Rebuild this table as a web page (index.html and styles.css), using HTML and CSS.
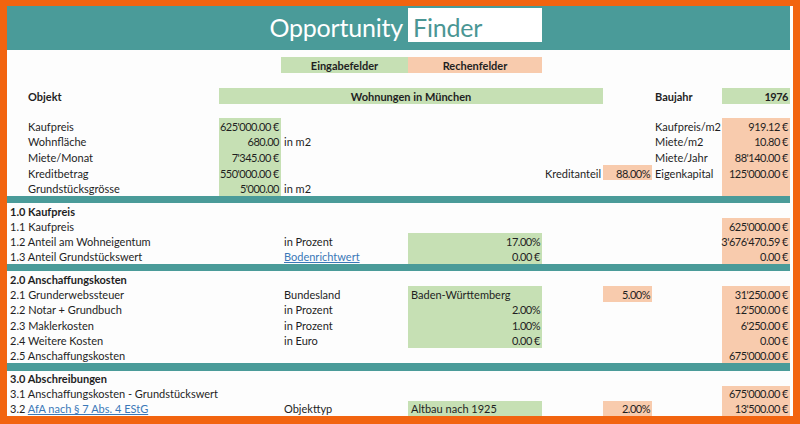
FILE: index.html
```html
<!DOCTYPE html>
<html lang="de">
<head>
<meta charset="utf-8">
<title>Opportunity Finder</title>
<link rel="stylesheet" href="styles.css">
</head>
<body>
<div class="frame">
  <header class="title-bar">
    <div class="title-left">Opportunity</div>
    <div class="title-box">Finder</div>
  </header>

  <div class="row gap7"></div>
  <div class="row h16">
    <div class="c3 green bold center">Eingabefelder</div>
    <div class="c4 orange bold center">Rechenfelder</div>
  </div>
  <div class="row gap15"></div>
  <div class="row h16">
    <div class="c1 bold indent">Objekt</div>
    <div class="c2-5 green bold center">Wohnungen in München</div>
    <div class="c7 bold">Baujahr</div>
    <div class="c8 green bold num">1976</div>
  </div>
  <div class="row gap14"></div>

  <div class="row r0">
    <div class="c1 indent">Kaufpreis</div>
    <div class="c2 green num">625'000.00 €</div>
    <div class="c7">Kaufpreis/m2</div>
    <div class="c8 orange num">919.12 €</div>
  </div>
  <div class="row r0">
    <div class="c1 indent">Wohnfläche</div>
    <div class="c2 green num">680.00</div>
    <div class="c3">in m2</div>
    <div class="c7">Miete/m2</div>
    <div class="c8 orange num">10.80 €</div>
  </div>
  <div class="row r0">
    <div class="c1 indent">Miete/Monat</div>
    <div class="c2 green num">7'345.00 €</div>
    <div class="c7">Miete/Jahr</div>
    <div class="c8 orange num">88'140.00 €</div>
  </div>
  <div class="row r0">
    <div class="c1 indent">Kreditbetrag</div>
    <div class="c2 green num">550'000.00 €</div>
    <div class="c5 right">Kreditanteil</div>
    <div class="c6 orange num">88.00%</div>
    <div class="c7">Eigenkapital</div>
    <div class="c8 orange num">125'000.00 €</div>
  </div>
  <div class="row r0">
    <div class="c1 indent">Grundstücksgrösse</div>
    <div class="c2 green num">5'000.00</div>
    <div class="c3">in m2</div>
    <div class="c8 orange num"></div>
  </div>

  <div class="row bar b7"></div>

  <div class="row r1">
    <div class="c1 bold">1.0 Kaufpreis</div>
  </div>
  <div class="row r1">
    <div class="c1">1.1 Kaufpreis</div>
    <div class="c8 orange num">625'000.00 €</div>
  </div>
  <div class="row r1">
    <div class="c1">1.2 Anteil am Wohneigentum</div>
    <div class="c3">in Prozent</div>
    <div class="c4 green num">17.00%</div>
    <div class="c8 orange num">3'676'470.59 €</div>
  </div>
  <div class="row r1">
    <div class="c1">1.3 Anteil Grundstückswert</div>
    <div class="c3"><span class="link">Bodenrichtwert</span></div>
    <div class="c4 green num">0.00 €</div>
    <div class="c8 orange num">0.00 €</div>
  </div>

  <div class="row bar b7"></div>

  <div class="row r2">
    <div class="c1 bold">2.0 Anschaffungskosten</div>
  </div>
  <div class="row r2">
    <div class="c1">2.1 Grunderwebssteuer</div>
    <div class="c3">Bundesland</div>
    <div class="c4 green">Baden-Württemberg</div>
    <div class="c6 orange num">5.00%</div>
    <div class="c8 orange num">31'250.00 €</div>
  </div>
  <div class="row r2">
    <div class="c1">2.2 Notar + Grundbuch</div>
    <div class="c3">in Prozent</div>
    <div class="c4 green num">2.00%</div>
    <div class="c8 orange num">12'500.00 €</div>
  </div>
  <div class="row r2">
    <div class="c1">2.3 Maklerkosten</div>
    <div class="c3">in Prozent</div>
    <div class="c4 green num">1.00%</div>
    <div class="c8 orange num">6'250.00 €</div>
  </div>
  <div class="row r2">
    <div class="c1">2.4 Weitere Kosten</div>
    <div class="c3">in Euro</div>
    <div class="c4 green num">0.00 €</div>
    <div class="c8 orange num">0.00 €</div>
  </div>
  <div class="row r2">
    <div class="c1">2.5 Anschaffungskosten</div>
    <div class="c8 orange num">675'000.00 €</div>
  </div>

  <div class="row bar b8"></div>

  <div class="row r3">
    <div class="c1 bold">3.0 Abschreibungen</div>
  </div>
  <div class="row r3">
    <div class="c1">3.1 Anschaffungskosten - Grundstückswert</div>
    <div class="c8 orange num">675'000.00 €</div>
  </div>
  <div class="row r3">
    <div class="c1"><span>3.2 <span class="link">AfA nach § 7 Abs. 4 EStG</span></span></div>
    <div class="c3">Objekttyp</div>
    <div class="c4 green">Altbau nach 1925</div>
    <div class="c6 orange num">2.00%</div>
    <div class="c8 orange num">13'500.00 €</div>
  </div>
</div>
</body>
</html>
```

FILE: styles.css
```css
* { box-sizing: border-box; }

html, body {
  margin: 0;
  padding: 0;
  background: #ffffff;
}

body {
  font-family: "Lato", "Open Sans", sans-serif;
  font-size: 11px;
  color: #1f1f1f;
}

.frame {
  width: 800px;
  height: 424px;
  border-style: solid;
  border-color: #f26410;
  border-width: 6px 7px 8px 7px;
  padding-right: 3px;
  background: #fdfdfd;
  overflow: hidden;
}

.title-bar,
.row {
  display: grid;
  grid-template-columns: 212px 62px 127px 134px 61px 49px 70px 68px;
  width: 783px;
}

.title-bar {
  height: 44px;
  background: #4a9b99;
  align-items: start;
}

.title-left {
  grid-column: 1 / 4;
  text-align: right;
  padding-right: 5px;
  color: #ffffff;
  font-size: 25px;
  font-weight: 400;
  letter-spacing: -0.2px;
  line-height: 40px;
  margin-top: 1px;
}

.title-box {
  grid-column: 4;
  background: #ffffff;
  margin-top: 2px;
  height: 34px;
  color: #4a9694;
  font-size: 25px;
  font-weight: 400;
  letter-spacing: -0.2px;
  line-height: 38px;
  padding-left: 5px;
}

.row > div {
  white-space: nowrap;
  overflow: visible;
  display: flex;
  align-items: center;
  padding: 1px 3px 0;
}

.gap7 { height: 7px; }
.gap14 { height: 14px; }
.gap15 { height: 15px; }
.h16 { height: 16px; }
.r0 { height: 15.6px; }
.r1 { height: 15.25px; }
.r2 { height: 15.33px; }
.r3 { height: 15px; }

.bar { background: #4a9b99; }
.b7 { height: 7px; }
.b8 { height: 8px; }

.c1 { grid-column: 1; }
.c2 { grid-column: 2; }
.c3 { grid-column: 3; }
.c4 { grid-column: 4; }
.c5 { grid-column: 5; }
.c6 { grid-column: 6; }
.c7 { grid-column: 7; }
.c8 { grid-column: 8; }
.c2-5 { grid-column: 2 / 6; }

.row > .indent { padding-left: 21px; }
.row > .num {
  justify-content: flex-end;
  padding-right: 2px;
  letter-spacing: -0.5px;
}
.row > .right { justify-content: flex-end; padding-right: 2px; }
.row > .center { justify-content: center; }

.bold { font-weight: 700; }

.green { background: #c6e0b4; }
.orange { background: #f8cbad; }

.link {
  color: #3a78b8;
  text-decoration: underline;
}
```
